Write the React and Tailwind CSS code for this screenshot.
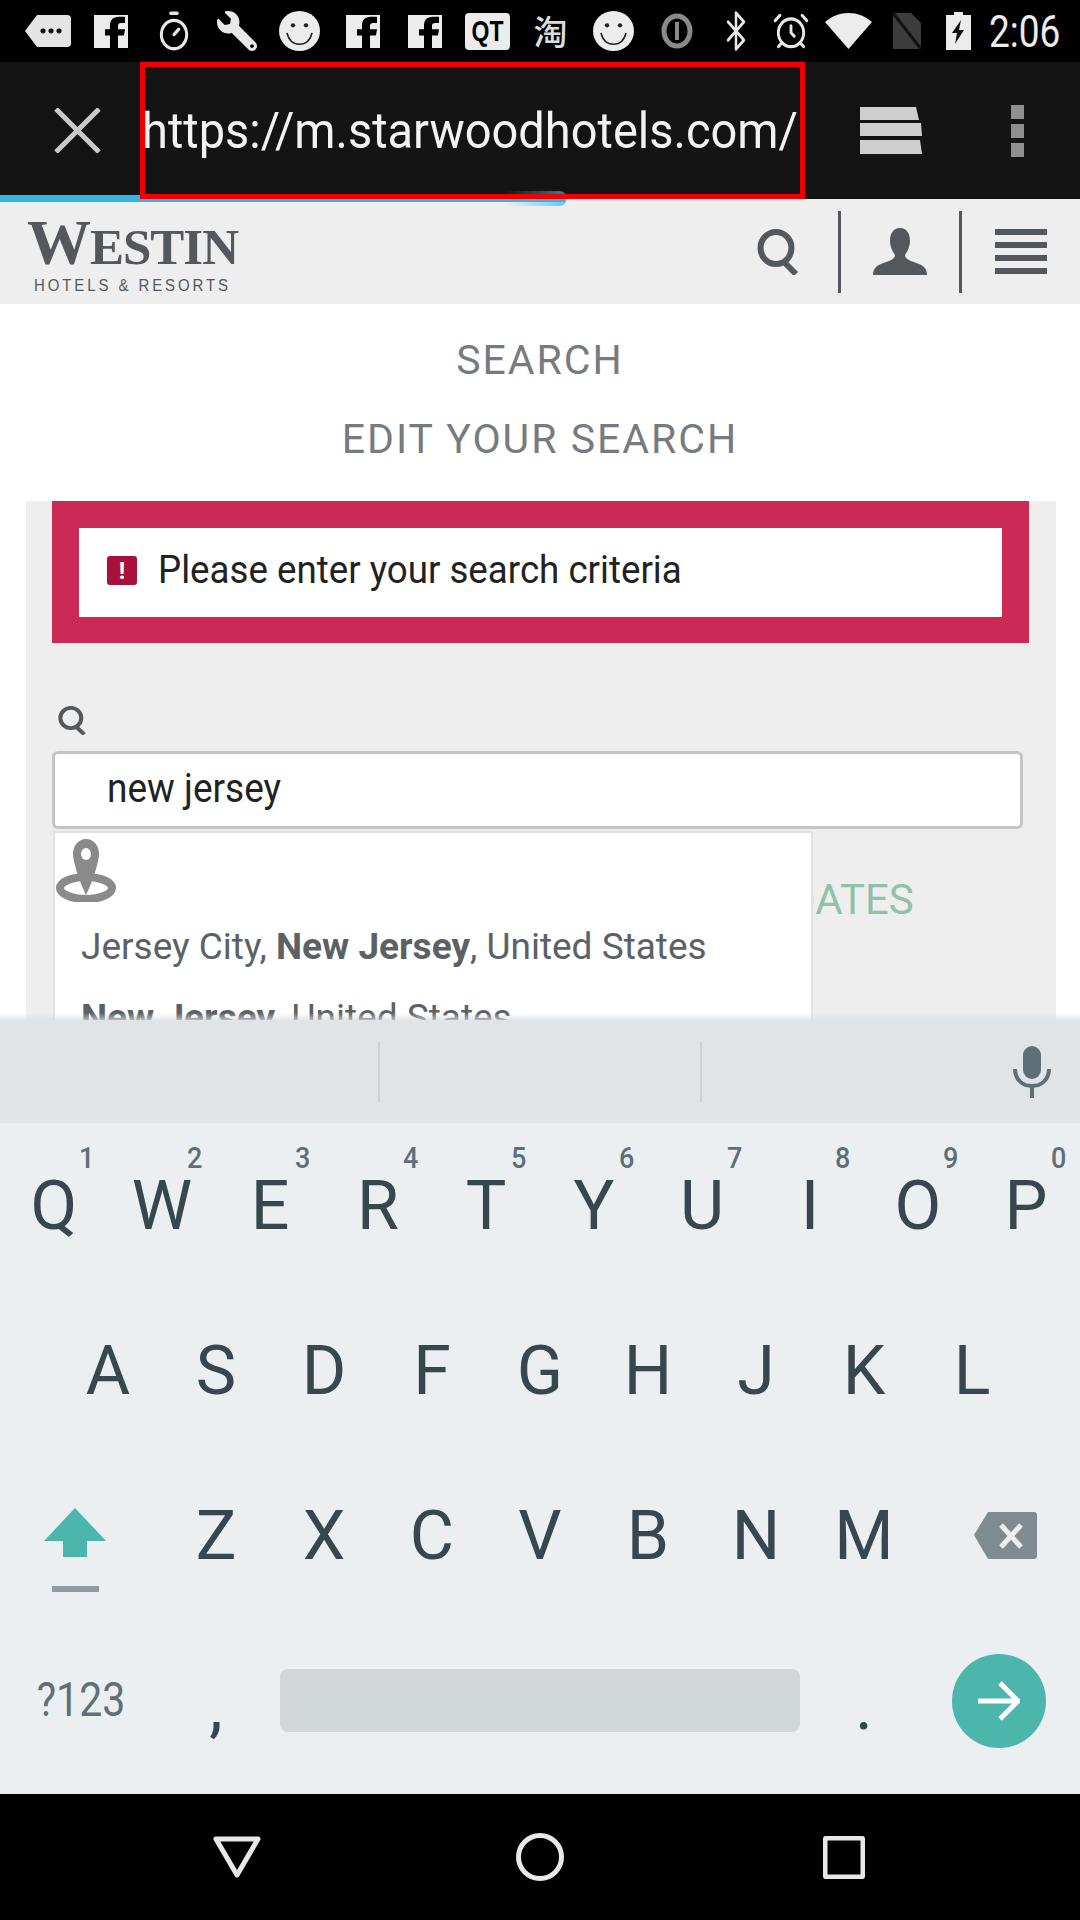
import { Timer, AlarmClock, Bluetooth } from "lucide-react";
import { FaWrench } from "react-icons/fa";

const ROBOTO = "font-['Roboto',sans-serif]";

/* =========================
   STATUS BAR ICONS
========================= */
function Fb() {
  return (
    <svg width="34" height="34" viewBox="0 0 34 38" preserveAspectRatio="none">
      <path d="M0 1h34v37H24V24h6l1-7h-7v-4c0-2 1-3 3-3h4V3h-6c-6 0-9 4-9 9v5h-5v7h5v14H0z" fill="#ececec" />
    </svg>
  );
}

function Smiley() {
  return (
    <svg width="41" height="40" viewBox="0 0 41 42" preserveAspectRatio="none">
      <ellipse cx="20.5" cy="21" rx="20.5" ry="21" fill="#ececec" />
      <circle cx="14" cy="15" r="2.2" fill="#222" />
      <circle cx="27" cy="15" r="2.2" fill="#222" />
      <path d="M8 23c2 9 7 12 12.5 12S31 32 33 23" fill="none" stroke="#222" strokeWidth="1.6" />
    </svg>
  );
}

function Bubble() {
  return (
    <svg width="46" height="34" viewBox="0 0 46 36" preserveAspectRatio="none">
      <path d="M12 1h30a4 4 0 0 1 4 4v26a4 4 0 0 1-4 4H12L0 18z" fill="#e4e4e4" />
      <circle cx="18" cy="18" r="2.6" fill="#111" />
      <circle cx="26" cy="18" r="2.6" fill="#111" />
      <circle cx="34" cy="18" r="2.6" fill="#111" />
    </svg>
  );
}

function StatusBar() {
  return (
    <div className="h-[62px] bg-black flex items-center pl-[16px] shrink-0">
      <Slot w="w-[63px]"><Bubble /></Slot>
      <Slot w="w-[63px]"><Fb /></Slot>
      <Slot w="w-[63px]"><Timer size={38} strokeWidth={1.9} className="text-[#e8e8e8] scale-y-[1.12]" /></Slot>
      <Slot w="w-[63px]"><FaWrench size={40} className="text-[#e8e8e8] -scale-x-100" /></Slot>
      <Slot w="w-[63px]"><Smiley /></Slot>
      <Slot w="w-[63px]"><Fb /></Slot>
      <Slot w="w-[62px]"><Fb /></Slot>
      <Slot w="w-[63px]">
        <div className="w-[45px] h-[37px] rounded-[4px] bg-[#ececec] flex items-center justify-center text-[23px] font-bold text-black font-['Liberation_Sans',sans-serif]">
          <span className="scale-y-[1.25]">QT</span>
        </div>
      </Slot>
      <Slot w="w-[63px]">
        <span className="text-[34px] leading-none font-medium text-[#dcdcdc] font-['Noto_Sans_CJK_SC',sans-serif]">淘</span>
      </Slot>
      <Slot w="w-[63px]"><Smiley /></Slot>
      <Slot w="w-[63px]">
        <svg width="32" height="36" viewBox="0 0 32 36" preserveAspectRatio="none">
          <ellipse cx="16" cy="18" rx="13" ry="15" fill="none" stroke="#8a8a8a" strokeWidth="5" />
          <rect x="14" y="9" width="4" height="18" fill="#8a8a8a" />
        </svg>
      </Slot>
      <Slot w="w-[55px]"><Bluetooth size={38} strokeWidth={1.6} className="text-[#e8e8e8] scale-y-[1.15]" /></Slot>
      <Slot w="w-[55px]"><AlarmClock size={38} strokeWidth={1.8} className="text-[#e8e8e8] scale-y-[1.1]" /></Slot>
      <Slot w="w-[60px]">
        <svg width="47" height="36" viewBox="0 0 47 36" preserveAspectRatio="none">
          <path d="M23.5 36L0 9C7 3 15 0 23.5 0S40 3 47 9z" fill="#ececec" />
        </svg>
      </Slot>
      <Slot w="w-[56px]">
        <svg width="31" height="36" viewBox="0 0 31 36" preserveAspectRatio="none">
          <path d="M2 0h18l10 10v26H2z" fill="#3c3c3c" />
          <path d="M2 0l28 36" stroke="#111" strokeWidth="3" />
        </svg>
      </Slot>
      <Slot w="w-[49px]">
        <svg width="25" height="38" viewBox="0 0 25 38" preserveAspectRatio="none">
          <path d="M8 0h9v3h8v35H0V3h8z" fill="#ececec" />
          <path d="M15 8L6 21h5l-2 11 9-14h-5z" fill="#111" />
        </svg>
      </Slot>
      <span className={`${ROBOTO} text-[37px] text-[#ececec] leading-none ml-[6px] scale-y-[1.22]`}>2:06</span>
    </div>
  );
}

function Slot({ w, children }) {
  return <div className={`${w} flex items-center justify-center shrink-0`}>{children}</div>;
}

/* =========================
   BROWSER TOOLBAR
========================= */
function Toolbar() {
  return (
    <div className="relative h-[137px] bg-[#141414] flex items-center shrink-0">
      <div className="w-[140px] flex justify-center pl-[14px]">
        <svg width="47" height="45" viewBox="0 0 47 45" preserveAspectRatio="none">
          <path d="M2 1l43 43M45 1L2 44" stroke="#c9c9c9" strokeWidth="5" />
        </svg>
      </div>
      <div className="w-[665px] h-full border-[5px] border-[#f00000] z-10 flex items-center overflow-hidden">
        <span className={`${ROBOTO} text-[47px] leading-none text-[#f2f2f2] whitespace-nowrap scale-y-[1.08] -ml-[3px]`}>
          https://m.starwoodhotels.com/
        </span>
      </div>
      <div className="ml-[55px]">
        <svg width="62" height="47" viewBox="0 0 62 47" preserveAspectRatio="none">
          <path d="M0 0h56l3 13H0zM0 16h61l1 13H0zM0 33h60l2 14H0z" fill="#cfcfcf" />
        </svg>
      </div>
      <div className="ml-[89px] flex flex-col gap-[5px]">
        <div className="w-[13px] h-[14px] bg-[#8f8f8f]" />
        <div className="w-[13px] h-[14px] bg-[#8f8f8f]" />
        <div className="w-[13px] h-[14px] bg-[#8f8f8f]" />
      </div>
      {/* page load progress */}
      <div className="absolute left-0 bottom-[-3px] w-[565px] h-[7px] bg-[#33b5e5]" />
      <div className="absolute left-[505px] bottom-[-7px] w-[62px] h-[15px] rounded-r-full bg-gradient-to-r from-transparent to-[#33b5e5]/70" />
    </div>
  );
}

function SearchGlyph({ w, h, color }) {
  return (
    <svg width={w} height={h} viewBox="0 0 43 46" preserveAspectRatio="none">
      <ellipse cx="19" cy="19" rx="15.5" ry="16" fill="none" stroke={color} strokeWidth="6" />
      <path d="M27 33l12 12" stroke={color} strokeWidth="6" />
    </svg>
  );
}

/* =========================
   SITE HEADER
========================= */
function SiteHeader() {
  return (
    <div className="h-[105px] bg-[#eeeeee] flex items-center shrink-0">
      <div className="ml-[26px] w-[213px] flex flex-col items-center text-[#54585c]">
        <div className="font-['Liberation_Serif',serif] leading-none whitespace-nowrap font-bold tracking-[-1px]">
          <span className="text-[64px]">W</span>
          <span className="text-[51px]">ESTIN</span>
        </div>
        <div className="font-['Liberation_Sans',sans-serif] text-[15px] leading-none tracking-[2.9px] whitespace-nowrap mt-[2px] scale-y-[1.15]">
          HOTELS &amp; RESORTS
        </div>
      </div>
      <div className="ml-[518px]">
        <SearchGlyph w={43} h={46} color="#54585c" />
      </div>
      <div className="ml-[38px] w-[3px] h-[82px] bg-[#54585c]" />
      <div className="ml-[32px]">
        <svg width="54" height="47" viewBox="0 0 54 47" preserveAspectRatio="none">
          <path d="M27 0c7 0 10 6 10 13 0 6-3 11-5 14 0 5 7 6 14 9 5 2 8 5 8 11H0c0-6 3-9 8-11 7-3 14-4 14-9-2-3-5-8-5-14 0-7 3-13 10-13z" fill="#54585c" />
        </svg>
      </div>
      <div className="ml-[32px] w-[3px] h-[82px] bg-[#54585c]" />
      <div className="ml-[33px] flex flex-col gap-[7px]">
        <div className="w-[52px] h-[6px] bg-[#54585c]" />
        <div className="w-[52px] h-[6px] bg-[#54585c]" />
        <div className="w-[52px] h-[6px] bg-[#54585c]" />
        <div className="w-[52px] h-[6px] bg-[#54585c]" />
      </div>
    </div>
  );
}

/* =========================
   PAGE CONTENT
========================= */
function Content() {
  return (
    <div className={`${ROBOTO} flex-1 min-h-0 overflow-hidden bg-white flex flex-col`}>
      <div className="text-center text-[41px] leading-none tracking-[2px] text-[#777b7f] mt-[36px]">SEARCH</div>
      <div className="text-center text-[41px] leading-none tracking-[2px] text-[#777b7f] mt-[38px]">EDIT YOUR SEARCH</div>

      <div className="ml-[26px] mr-[24px] mt-[41px] flex-1 bg-[#eeeeee] pl-[26px] pr-[27px] relative">
        <div className="bg-[#cb2a57] p-[27px] pb-[26px]">
          <div className="h-[89px] bg-white flex items-center pl-[28px] pb-[4px]">
            <div className="w-[30px] h-[29px] rounded-[3px] bg-[#a8123a] flex items-center justify-center text-white font-bold text-[24px] leading-none">!</div>
            <span className="ml-[21px] text-[36.7px] leading-none text-[#222222] scale-y-[1.08]">Please enter your search criteria</span>
          </div>
        </div>

        <div className="mt-[63px] ml-[6px]">
          <SearchGlyph w={29} h={29} color="#54585c" />
        </div>

        <div className="mt-[16px] mr-[6px] h-[78px] bg-white border-[3px] border-[#c4c4c4] rounded-[6px] flex items-center pl-[52px] pb-[4px]">
          <span className="text-[37px] leading-none text-[#222222] scale-y-[1.08]">new jersey</span>
        </div>

        <div className="text-[42px] leading-none text-[#8fc2a8] absolute left-[762px] top-[378px]">DATES</div>

        {/* autocomplete dropdown, sits over the date row */}
        <div className="absolute left-[27px] top-[330px] w-[760px] h-[260px] bg-white border-x-[2px] border-t-[2px] border-[#e2e2e2]">
          <svg width="60" height="63" viewBox="0 0 60 63" preserveAspectRatio="none" className="mt-[6px] ml-[1px]">
            <ellipse cx="30" cy="49" rx="26" ry="11" fill="none" stroke="#8a8a8a" strokeWidth="8" />
            <path d="M30 0c8 0 13 7 13 15 0 7-6 27-13 41-7-14-13-34-13-41C17 7 22 0 30 0z" fill="#8a8a8a" />
            <ellipse cx="30" cy="15" rx="5" ry="6" fill="#ffffff" />
          </svg>
          <div className="mt-[26px] ml-[26px] text-[37px] leading-none text-[#5c6166] whitespace-nowrap">
            Jersey City, <b>New Jersey</b>, United States
          </div>
          <div className="mt-[34px] ml-[26px] text-[37px] leading-none text-[#5c6166] whitespace-nowrap">
            <b>New Jersey</b>, United States
          </div>
        </div>
      </div>
    </div>
  );
}

/* =========================
   KEYBOARD
========================= */
function Key({ label, digit }) {
  return (
    <div className="relative w-[108px] flex items-center justify-center shrink-0">
      <span className="text-[68px] leading-none text-[#37474f]">{label}</span>
      {digit && (
        <span className="absolute left-[79px] top-[22px] text-[27px] font-medium leading-none text-[#5f6f78] scale-y-[1.1]">{digit}</span>
      )}
    </div>
  );
}

function Keyboard() {
  return (
    <div className={`${ROBOTO} relative h-[774px] shrink-0 bg-[#ebeff2] flex flex-col`}>
      <div className="absolute left-0 right-0 -top-[7px] h-[7px] bg-gradient-to-b from-transparent to-[#d8dcdf]/70" />

      {/* suggestion strip */}
      <div className="h-[103px] bg-[#e1e4e7] flex items-center relative">
        <div className="ml-[378px] w-[2px] h-[62px] bg-[#cfd3d6]" />
        <div className="ml-[320px] w-[2px] h-[62px] bg-[#cfd3d6]" />
        <svg width="38" height="52" viewBox="0 0 38 52" preserveAspectRatio="none" className="ml-[311px]">
          <rect x="10" y="0" width="18" height="33" rx="9" fill="#5f6f78" />
          <path d="M2 23c0 11 8 17 17 17s17-6 17-17M19 40v12" fill="none" stroke="#5f6f78" strokeWidth="4" />
        </svg>
      </div>

      <div className="h-[165px] flex">
        {["Q", "W", "E", "R", "T", "Y", "U", "I", "O", "P"].map((k, i) => (
          <Key key={k} label={k} digit={String((i + 1) % 10)} />
        ))}
      </div>

      <div className="h-[165px] flex pl-[54px]">
        {["A", "S", "D", "F", "G", "H", "J", "K", "L"].map((k) => (
          <Key key={k} label={k} />
        ))}
      </div>

      <div className="h-[165px] flex">
        <div className="w-[162px] pr-[12px] flex flex-col items-center justify-center">
          <svg width="62" height="49" viewBox="0 0 62 49" preserveAspectRatio="none" className="mt-[29px]">
            <path d="M31 0l31 33H43v16H19V33H0z" fill="#4db6ac" />
          </svg>
          <div className="w-[47px] h-[6px] bg-[#8f9aa1] mt-[29px]" />
        </div>
        {["Z", "X", "C", "V", "B", "N", "M"].map((k) => (
          <Key key={k} label={k} />
        ))}
        <div className="flex-1 flex items-center justify-center pl-[12px]">
          <svg width="63" height="47" viewBox="0 0 63 47" preserveAspectRatio="none">
            <path d="M14 0h46a3 3 0 0 1 3 3v41a3 3 0 0 1-3 3H14L0 23z" fill="#7f8b91" />
            <path d="M27 13l20 22M47 13L27 35" stroke="#ebeff2" strokeWidth="5" />
          </svg>
        </div>
      </div>

      <div className="h-[176px] flex pb-[11px]">
        <div className="w-[162px] flex items-center justify-center">
          <span className="text-[41px] leading-none text-[#5f6f78] scale-y-[1.15]">?123</span>
        </div>
        <div className="w-[108px] flex items-center justify-center">
          <span className="text-[68px] leading-none text-[#37474f] mt-[10px]">,</span>
        </div>
        <div className="w-[540px] px-[10px] flex items-center">
          <div className="w-full h-[63px] rounded-[8px] bg-[#d1d6d9]" />
        </div>
        <div className="w-[108px] flex items-center justify-center">
          <span className="text-[68px] leading-none text-[#37474f] mt-[10px]">.</span>
        </div>
        <div className="flex-1 flex items-center justify-center">
          <div className="w-[94px] h-[94px] rounded-full bg-[#4db6ac] flex items-center justify-center">
            <svg width="42" height="42" viewBox="0 0 42 42">
              <path d="M0 21h38M22 3l18 18-18 18" fill="none" stroke="#ffffff" strokeWidth="5" />
            </svg>
          </div>
        </div>
      </div>
    </div>
  );
}

function NavBar() {
  return (
    <div className="h-[126px] bg-black flex items-center justify-center shrink-0">
      <svg width="48" height="42" viewBox="0 0 48 42" preserveAspectRatio="none" className="-ml-[2px]">
        <path d="M3 3h42L24 39z" fill="none" stroke="#e8e8e8" strokeWidth="5" strokeLinejoin="round" />
      </svg>
      <svg width="48" height="48" viewBox="0 0 48 48" className="ml-[255px]">
        <circle cx="24" cy="24" r="21.5" fill="none" stroke="#e8e8e8" strokeWidth="5" />
      </svg>
      <svg width="42" height="43" viewBox="0 0 42 43" className="ml-[259px]">
        <rect x="2" y="2" width="38" height="39" rx="2" fill="none" stroke="#e8e8e8" strokeWidth="5" />
      </svg>
    </div>
  );
}

export default function App() {
  return (
    <div className="w-[1080px] h-[1920px] flex flex-col overflow-hidden bg-black">
      <StatusBar />
      <Toolbar />
      <SiteHeader />
      <Content />
      <Keyboard />
      <NavBar />
    </div>
  );
}
